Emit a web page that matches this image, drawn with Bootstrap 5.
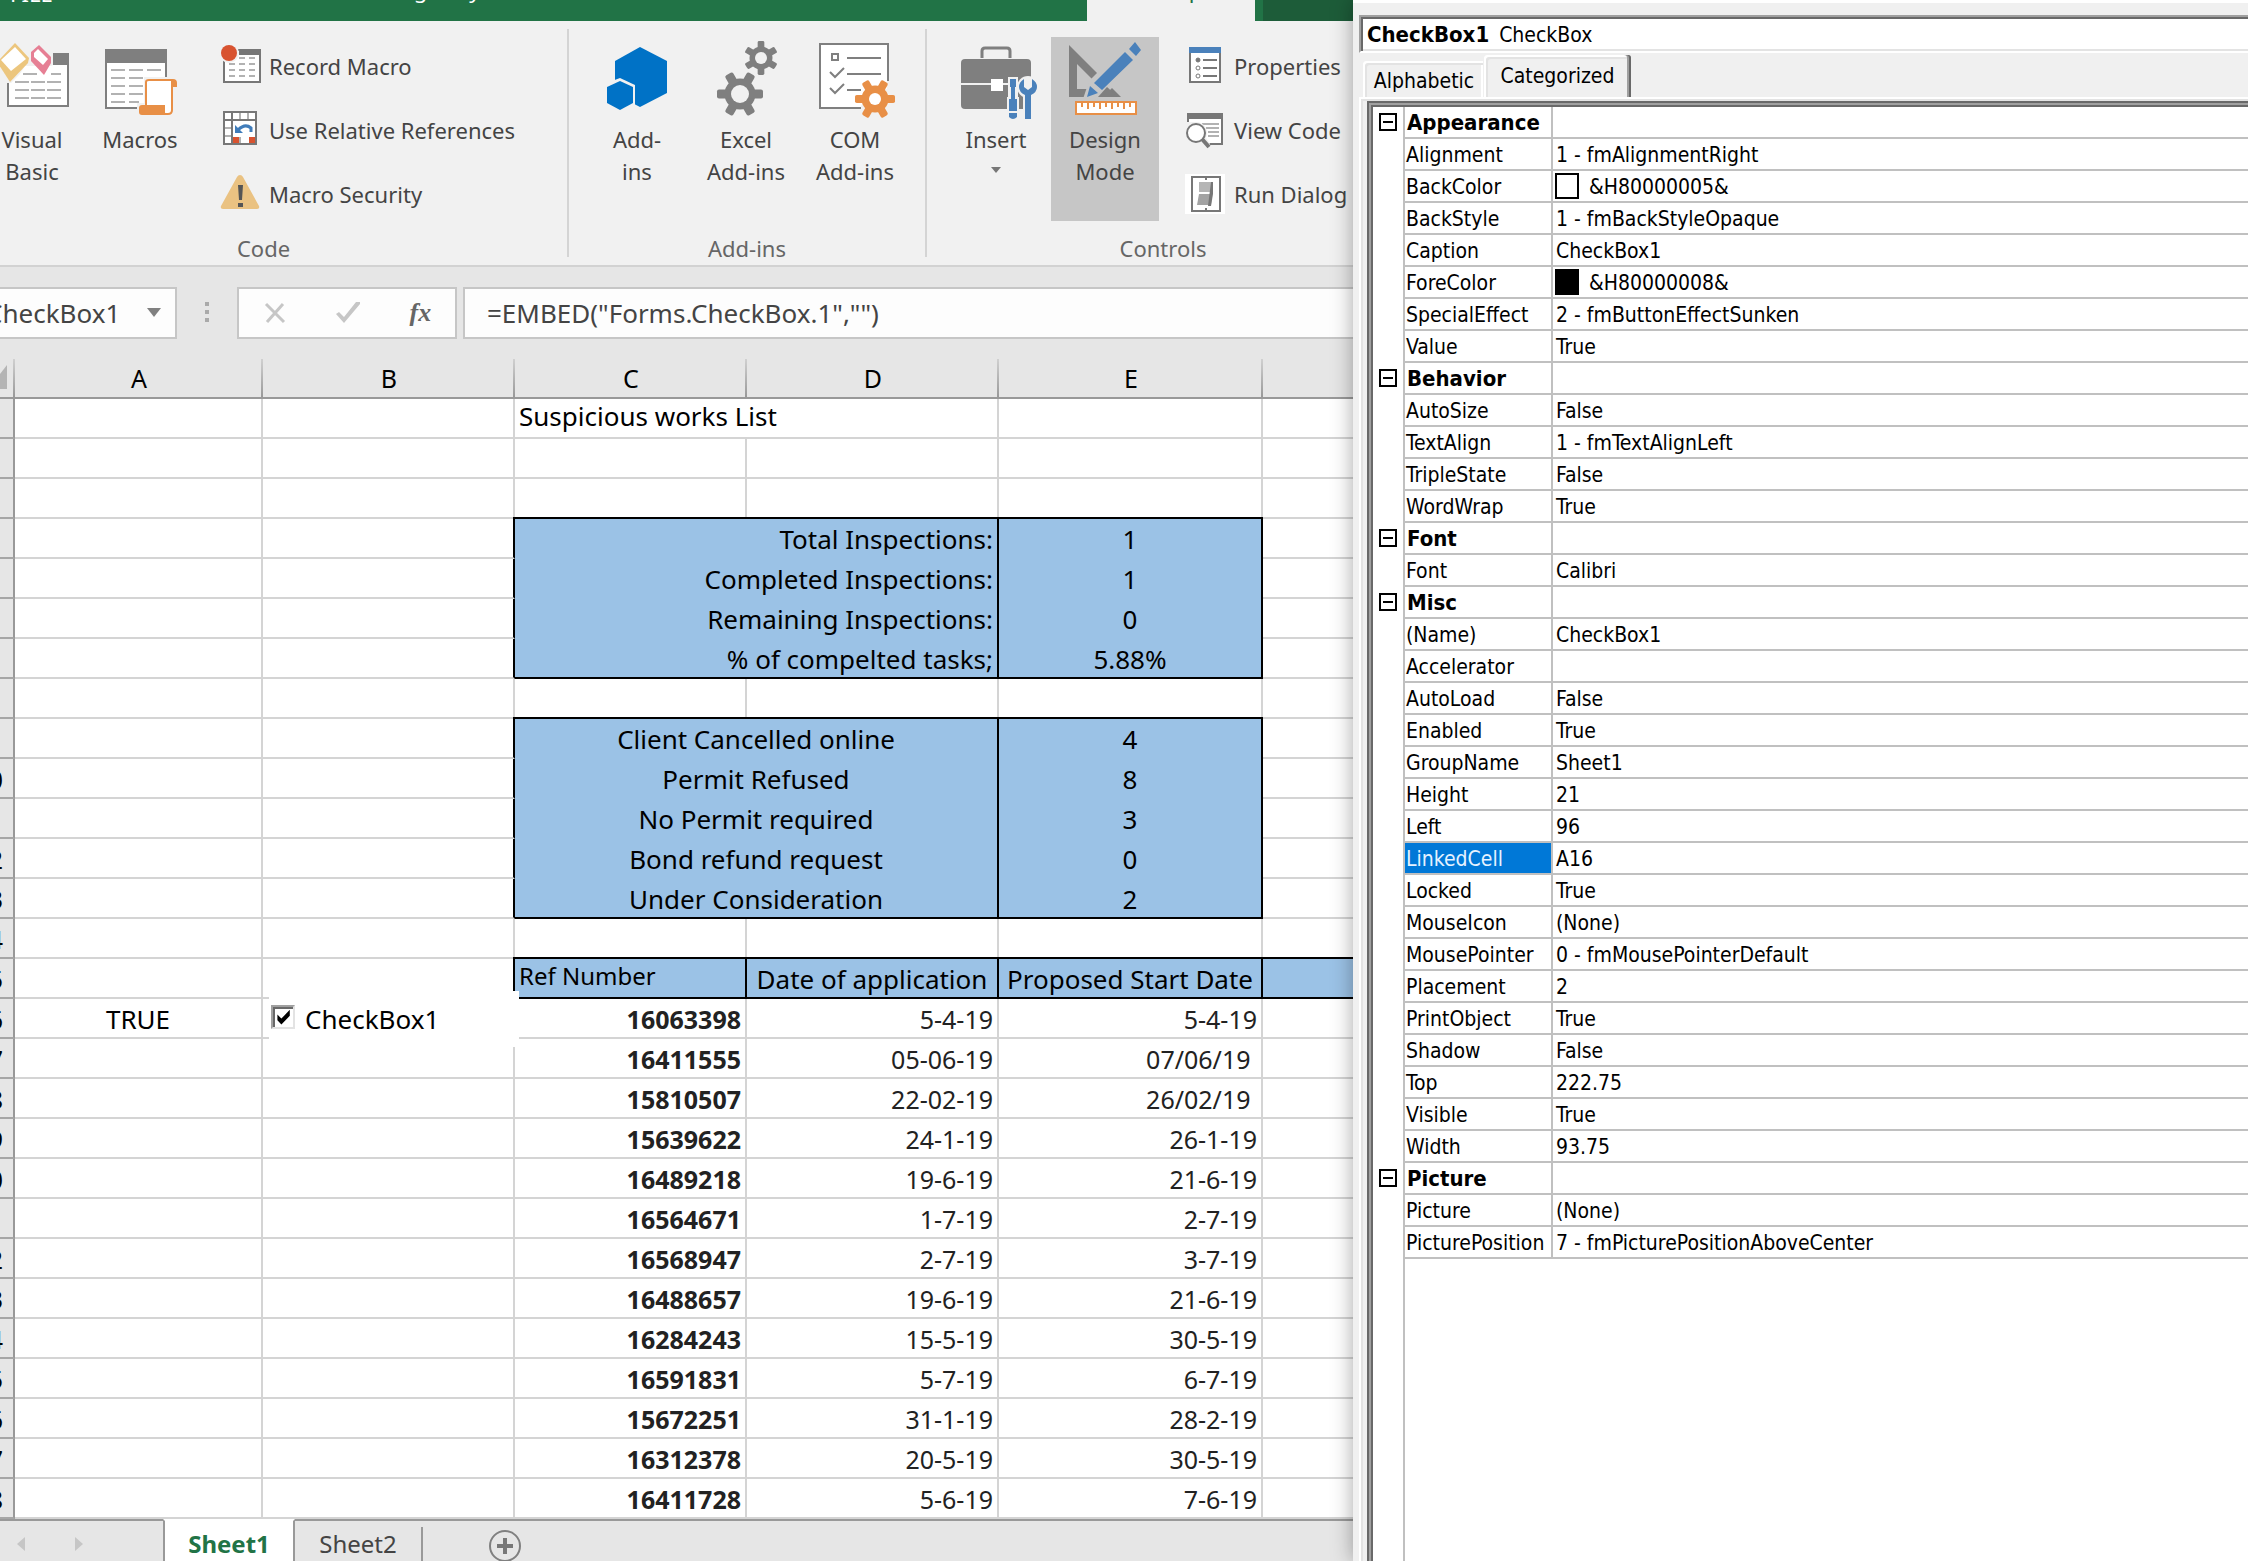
<!DOCTYPE html>
<html lang="en">
<head>
<meta charset="utf-8">
<meta name="viewport" content="width=device-width, initial-scale=1">
<title>Sheet1 - Suspicious works List</title>
<link href="https://cdn.jsdelivr.net/npm/bootstrap@5.3.0/dist/css/bootstrap.min.css" rel="stylesheet">
<script src="https://cdn.jsdelivr.net/npm/bootstrap@5.3.0/dist/js/bootstrap.bundle.min.js"></script>
<style>
  body { font-family: "Noto Sans", "Open Sans", sans-serif; font-size: 22px; line-height: 32px; color: #444; background: #f0f0f0; }
  svg { display: block; flex: none; }
  button { color: inherit; }
  .workspace { display: grid; grid-template-columns: minmax(0, 1353fr) minmax(0, 895fr); min-height: 100vh; overflow: hidden; }
  .excel { background: #e6e6e6; white-space: nowrap; }

  /* ribbon */
  .tabstrip { background: #217346; height: 21px; overflow: hidden; }
  .tabstrip a { color: #fff; text-decoration: none; height: 48px; margin-top: -27px; }
  .tab-file { padding: 4px 0 0 10px; width: 388px; }
  .tab-layout { width: 699px; }
  .tab-dev { background: #f1f1f1; width: 168px; text-align: center; }
  .tabstrip a.tab-dev { color: #217346; }
  .tab-more { background: #1d5c39; margin-left: 8px; }
  .ribbon { background: #f1f1f1; border-bottom: 2px solid #d2d2d2; height: 246px; overflow: hidden; }
  .rgroup { flex: none; padding-top: 13px; }
  .rgroup-code { width: 607px; margin-left: -40px; padding-left: 24px; }
  .rgroup-addins { width: 356px; padding-left: 14px; }
  .rgroup-controls { width: 472px; padding-left: 15px; }
  .rsep { flex: none; width: 2px; margin: 8px 0; background: #d4d4d4; }
  .rgroup-name { color: #666; margin-top: 6px; text-align: center; }
  .rgroup-code .rgroup-name { margin-left: -24px; }
  .rgroup-addins .rgroup-name { margin-left: -14px; }
  .rgroup-controls .rgroup-name { margin-left: -15px; }
  .rbody { height: 192px; }
  .rgroup-addins .rbody, .rgroup-controls .rbody { gap: 1px; }
  .small-col { margin-left: 20px; }
  .rgroup-controls .small-col { margin-left: 25px; }
  .big { display: flex; flex-direction: column; align-items: center; width: 108px; height: 184px; margin-top: 3px; padding: 0; border: 0; background: none; text-align: center; white-space: normal; }
  .big-vb { width: 96px; }
  .big-macros { width: 120px; }
  .big-on { background: #c6c6c6; }
  .caret { width: 0; height: 0; margin-top: 12px; border: 5px solid transparent; border-top: 6px solid #777; border-bottom: 0; }
  .small-item { height: 64px; border: 0; padding: 0; background: none; display: flex; align-items: center; gap: 9px; }

  /* formula bar */
  .fbar { padding: 20px 0; font-size: 26px; }
  .fbox { background: #fdfdfd; border: 2px solid #c6c6c6; height: 52px; }
  .namebox { width: 177px; border-left: 0; }
  .namebox input { width: 140px; margin-left: -14px; }
  .fbar input { border: 0; padding: 0; background: none; color: #444; outline: 0; min-width: 0; }
  .dots { width: 60px; }
  .fbtns { width: 220px; margin-right: 6px; }
  .fbtns button { border: 0; padding: 0; background: none; }
  .fx-btn { font: italic 700 26px/32px "Liberation Serif", serif; color: #666; }
  .ftext { border-right: 0; padding-left: 22px; }

  /* sheet */
  .grid { width: 100%; table-layout: fixed; border-collapse: separate; border-spacing: 0; color: #000; font-size: 26px; line-height: 36px; }
  .grid th { height: 40px; padding: 0; font-weight: 400; text-align: center; background: #e6e6e6; border-right: 2px solid; border-bottom: 2px solid #999; }
  .grid thead th { border-right: 0; font-size: 25px; background: linear-gradient(#d0d0d0, #999) right / 2px 100% no-repeat #e6e6e6; }
  .grid thead th:last-child { background: #e6e6e6; }
  .grid tbody th { border-right-color: #999; border-bottom-color: #a6a6a6; }
  .rownum { display: flex; justify-content: flex-end; height: 36px; margin-top: 2px; padding-right: 10px; font-size: 25px; }
  .grid td { height: 40px; padding: 2px 4px 0 4px; overflow: hidden; background: #fff; border-right: 2px solid #d4d4d4; border-bottom: 2px solid #d4d4d4; }
  .grid td:last-child { border-right: 0; }
  .grid td.num { font-size: 25px; text-align: right; color: #222; }
  .grid td.ref { font-weight: 700; }
  .grid td.upper { line-height: 32px; padding: 0 4px 4px; }
  .grid td.fs-ref { font-size: 24px; }
  .grid td.blue { background: #9bc2e6; }
  .grid td.kr { border-right-color: #000; }
  .grid td.kb { border-bottom-color: #000; }
  .grid td.kt { box-shadow: -2px -2px 0 #000, 0 -2px 0 #000; }
  .grid td.nb { border-bottom: 0; padding-bottom: 2px; }
  .grid td.host { position: relative; overflow: visible; }
  .checkctl { position: absolute; left: 6px; top: -8px; width: 250px; height: 56px; background: #fff; display: flex; align-items: center; gap: 10px; padding: 0 0 0 2px; z-index: 2; }
  .checkctl input { appearance: none; margin: 0 0 4px; width: 24px; height: 24px; border: 2px solid #a0a0a0; border-right-color: #e3e3e3; border-bottom-color: #e3e3e3; box-shadow: inset 2px 2px 0 #696969; position: relative; }
  .checkctl input:checked::after { content: ""; position: absolute; inset: 0; background: #000; clip-path: polygon(22% 38%, 42% 58%, 84% 14%, 84% 44%, 42% 88%, 22% 66%); }

  .sheets { height: 42px; font-size: 24px; }
  .sheets > * { border-top: 2px solid #999; }
  .sheets button { border-width: 2px 0 0; border-style: solid; border-color: #999; padding: 5px 0 0; background: none; }
  .nav-arrows { width: 163px; padding: 16px 0 0 16px; }
  .sheets .s-on { width: 132px; background: #fff; color: #217346; font-weight: 700; border: 2px solid #999; border-top-color: #fff; border-bottom: 0; }
  .sheets .s-off { width: 126px; }
  .s-end { padding-top: 6px; }
  .s-end i { display: block; width: 2px; height: 34px; background: #999; }

  /* properties window */
  .props { position: relative; z-index: 3; background: #f0f0f0; border-top: 3px solid #fff; box-shadow: 0 0 20px rgba(0,0,0,.35); color: #000; font-family: "DejaVu Sans Condensed", "DejaVu Sans", sans-serif; font-size: 21px; line-height: 28px; white-space: nowrap; padding: 12px 0 0 6px; }
  .objbox { height: 38px; background: #fff; border: 2px solid #a0a0a0; border-right: 0; border-bottom-color: #fff; box-shadow: inset 2px 2px 0 #696969, inset 0 -2px 0 #e3e3e3; padding: 4px 0 0 6px; }
  .objbox b { font-size: 22px; margin-right: 10px; }
  .ptabs { padding: 4px 0 0 4px; height: 44px; }
  .ptabs button { border: 0; padding: 4px 0 0 2px; background: #f0f0f0; }
  .ptabs .p-cat { padding: 0; }
  .p-alpha { width: 120px; height: 36px; border-radius: 3px 0 0; box-shadow: inset 2px 2px 0 #fff, inset 4px 4px 0 #e3e3e3, inset -2px 0 0 #fff; }
  .p-cat { width: 147px; height: 42px; margin-left: 1px; border-radius: 3px 3px 0 0; box-shadow: inset -2px 0 0 #696969, inset -4px 0 0 #a0a0a0, inset 2px 2px 0 #fff, inset 4px 4px 0 #e3e3e3; }
  .p-page { border-left: 2px solid #fff; border-top: 2px solid #fff; box-shadow: inset 2px 2px 0 #e3e3e3; padding: 2px 0 0 6px; }
  .p-frame { border-left: 2px solid #696969; border-top: 2px solid #696969; box-shadow: inset 2px 2px 0 #a0a0a0, inset 4px 4px 0 #696969; padding: 4px 0 0 4px; background: #fff; }
  .plist { width: 100%; table-layout: fixed; border-collapse: separate; border-spacing: 0; }
  .plist td, .plist th { height: 32px; padding: 2px 0 0 1px; font-weight: 400; border-bottom: 2px solid #c0c0c0; border-right: 2px solid #c0c0c0; }
  .plist td:last-child { border-right: 0; padding-left: 3px; }
  .plist .gut { border-bottom: 0; padding: 0 0 2px 6px; }
  .plist .cat { font-weight: 700; font-size: 22px; padding-left: 2px; }
  .plist .sel { background: #0078d7; color: #e6f2ff; }
  .fold { display: block; width: 18px; height: 18px; padding: 0; border: 2px solid #000; background: linear-gradient(#000, #000) center / 10px 2px no-repeat #fff; }
  .swatch { display: inline-block; width: 24px; height: 26px; border: 2px solid #000; vertical-align: top; margin: 0 10px 0 -1px; }
  .plist .rest { border-bottom: 0; }
</style>
</head>
<body>
<svg width="0" height="0" class="position-absolute" aria-hidden="true">
  <defs>
    <g id="gear">
      <circle r="15.500"/>
      <rect x="-23" y="-4.500" width="46" height="9" rx="2"/>
      <rect x="-23" y="-4.500" width="46" height="9" rx="2" transform="rotate(60)"/>
      <rect x="-23" y="-4.500" width="46" height="9" rx="2" transform="rotate(120)"/>
    </g>
  </defs>
</svg>

<div class="workspace">
  <main class="excel d-flex flex-column overflow-hidden">
    <nav class="tabstrip d-flex">
      <a href="#" class="tab-file flex-shrink-0">FILE</a>
      <a href="#" class="tab-layout flex-shrink-0">Page Layout</a>
      <a href="#" class="tab-dev flex-shrink-0">Developer</a>
      <div class="tab-more flex-fill"></div>
    </nav>

    <div class="ribbon d-flex">
      <section class="rgroup rgroup-code">
        <div class="rbody d-flex">
          <button type="button" class="big big-vb">
            <svg width="96" height="86" viewBox="-16 37 96 86">
              <path d="M8 54h60v52H8z" fill="#fff" stroke="#7f7f7f" stroke-width="2"/>
              <path d="M52 53h17v12H52z" fill="#7f7f7f"/>
              <path d="M15 82h14M31 82h14M47 82h14M15 90h14M31 90h14M47 90h14M15 98h14M31 98h14M47 98h14" stroke="#b2b2b2" stroke-width="2"/>
              <path d="M0 40h53v25l-4 2-4 6-20-4-14 14-13 0z" fill="#f1f1f1"/>
              <path d="M25 66h42v8H20z" fill="#fff"/>
              <path d="M23 74h14M51 74h10" stroke="#b2b2b2" stroke-width="2"/>
              <path d="M15 43 29 58 28 63 10 82-1 65v-5z" fill="#ecc67e"/>
              <path d="M15 47 26 59 11 71 1 60z" fill="#fff"/>
              <path d="M39 45 51 57v6L44 75 31 61v-9z" fill="#e67f94"/>
              <path d="M38 49 48 59 43 65 34 57v-4z" fill="#fff"/>
            </svg>
            <span>Visual<br>Basic</span>
          </button>
          <button type="button" class="big big-macros">
            <svg width="120" height="86" viewBox="80 37 120 86">
              <path d="M106 50h60v58h-60z" fill="#fff" stroke="#7f7f7f" stroke-width="2"/>
              <path d="M105 49h62v14h-62z" fill="#7f7f7f"/>
              <path d="M111 70h14M129 70h14M147 70h14M111 78h14M129 78h14M111 86h14M129 86h14M111 94h14M129 94h14M111 102h14M129 102h10" stroke="#b2b2b2" stroke-width="2"/>
              <path d="M144 77h35v40h-42V103h7z" fill="#f1f1f1"/>
              <path d="M149 80h23V110q0 4-4 4h-22V82q0-2 3-2z" fill="#fff" stroke="#e88f46" stroke-width="2"/>
              <path d="M149 79h24q4 0 4 4v4h-5v-6h-23zM142 105h23v7q0 3 3 3h-26q-3 0-3-3v-4q0-3 3-3z" fill="#e88f46"/>
            </svg>
            <span>Macros</span>
          </button>
          <div class="small-col">
            <button type="button" class="small-item">
              <svg width="40" height="40" viewBox="220 46 40 40" overflow="visible">
                <path d="M224 50h36v32h-36z" fill="#fff" stroke="#777" stroke-width="2"/>
                <path d="M239 49h22v6h-22z" fill="#777"/>
                <path d="M239 58h6M249 58h6M229 64h6M239 64h6M249 64h6M229 70h6M239 70h6M249 70h6M229 76h6M239 76h6M249 76h6" stroke="#b2b2b2" stroke-width="2"/>
                <circle cx="229" cy="53" r="10" fill="#f1f1f1"/><circle cx="229" cy="53" r="8" fill="#d85330"/>
              </svg>Record Macro
            </button>
            <button type="button" class="small-item">
              <svg width="40" height="40" viewBox="220 110 40 40">
                <path d="M224 112h32v32h-32z" fill="#fff" stroke="#777" stroke-width="2"/>
                <path d="M232 112v32M223 120h34" stroke="#777" stroke-width="2"/>
                <path d="M240 113v6M248 113v6M225 128h6M225 136h6M240 137v6" stroke="#b2b2b2" stroke-width="2"/>
                <path d="M233 137h6v6h-6zM249 137h6v6h-6z" fill="#d85330"/>
                <path d="M238 130q7-7 13-2v4" fill="none" stroke="#3f7cba" stroke-width="3"/>
                <path d="M235 125v8h8z" fill="#3f7cba"/>
              </svg>Use Relative References
            </button>
            <button type="button" class="small-item">
              <svg width="40" height="40" viewBox="220 174 40 40">
                <path d="M240 175q2 0 3 2l16 29q1 3-2 3h-34q-3 0-2-3l16-29q1-2 3-2z" fill="#eac282"/>
                <path d="M238 185h5l-1 15h-3zM238 203h5v4h-5z" fill="#555"/>
              </svg>Macro Security
            </button>
          </div>
        </div>
        <div class="rgroup-name">Code</div>
      </section>
      <div class="rsep"></div>

      <section class="rgroup rgroup-addins">
        <div class="rbody d-flex">
          <button type="button" class="big">
            <svg width="108" height="86" viewBox="583 37 108 86">
              <path d="M640 47l27 14v32l-27 14-25-13V61z" fill="#0072c6"/>
              <path d="M604 84l16-6 15 7v24h-31z" fill="#f1f1f1"/>
              <path d="M607 87l13-6 13 6v16l-13 7-13-7z" fill="#0072c6"/>
            </svg>
            <span>Add-<br>ins</span>
          </button>
          <button type="button" class="big">
            <svg width="108" height="86" viewBox="692 37 108 86">
              <g fill="#7f7f7f"><use href="#gear" transform="translate(740 94)"/><use href="#gear" transform="translate(761 58) rotate(30) scale(.74)"/></g>
              <circle cx="740" cy="94" r="9" fill="#f1f1f1"/><circle cx="761" cy="58" r="6" fill="#f1f1f1"/>
            </svg>
            <span>Excel<br>Add-ins</span>
          </button>
          <button type="button" class="big">
            <svg width="108" height="86" viewBox="801 37 108 86">
              <path d="M820 44h68v64h-68z" fill="#fff" stroke="#7f7f7f" stroke-width="2"/>
              <path d="M832 54h6v6h-6zM847 58h34M847 74h34M847 90h14M830 72l5 5 9-9M830 88l5 5 9-9" fill="none" stroke="#7f7f7f" stroke-width="2"/>
              <path d="M887 81h4v29h-30v-4l14-20z" fill="#f1f1f1"/><path d="M861 90h14v16h-12zM880 79h7v10h-12z" fill="#fff"/>
              <use href="#gear" fill="#e88f46" transform="translate(875 99) scale(.87)"/>
              <circle cx="875" cy="99" r="6" fill="#fff"/>
            </svg>
            <span>COM<br>Add-ins</span>
          </button>
        </div>
        <div class="rgroup-name">Add-ins</div>
      </section>
      <div class="rsep"></div>

      <section class="rgroup rgroup-controls">
        <div class="rbody d-flex">
          <button type="button" class="big">
            <svg width="108" height="86" viewBox="942 37 108 86">
              <path d="M982 58v-7q0-3 3-3h22q3 0 3 3v7" fill="none" stroke="#7f7f7f" stroke-width="3"/>
              <rect x="961" y="59" width="70" height="50" rx="4" fill="#7f7f7f"/>
              <path d="M961 83h70v2h-70z" fill="#f1f1f1"/><path d="M991 79h12v12h-12z" fill="#fff"/>
              <path d="M1008 77h10v20h1v24h-12V97h1z" fill="#f1f1f1"/>
              <circle cx="1028" cy="87" r="11" fill="#f1f1f1"/><path d="M1023 90h10v30h-10z" fill="#f1f1f1"/>
              <path d="M1010 79h6v8h-1v12h2v12h-8V99h2V87h-1zM1009 113h8v4q-4 4-8 0z" fill="#4a81bb"/>
              <path d="M1024 79v8l4 3 4-3v-8q5 3 5 8t-6 8v24h-6V95q-6-3-6-8t5-8z" fill="#4a81bb"/>
            </svg>
            <span>Insert</span>
            <span class="caret"></span>
          </button>
          <button type="button" class="big big-on">
            <svg width="108" height="86" viewBox="1051 37 108 86">
              <path fill-rule="evenodd" d="M1069 45l52 52h-52zM1077 64v25h25z" fill="#7f7f7f"/>
              <path d="M1083 99l6-18 38-38 16 14-40 40-16 6z" fill="#c6c6c6"/>
              <path d="M1098 97l9-10 11 10z" fill="#7f7f7f"/>
              <path d="M1087 97l3-11 8 7zM1094 83l31-31 8 8-31 30zM1129 49l6-7 6 8-5 6z" fill="#4a81bb"/>
              <path d="M1076 102h60v12h-60z" fill="#fff" stroke="#e88f46" stroke-width="2"/>
              <path d="M1082 102v5M1088 102v7M1094 102v5M1100 102v7M1106 102v5M1112 102v7M1118 102v5M1124 102v7M1130 102v5" stroke="#e88f46" stroke-width="2"/>
            </svg>
            <span>Design<br>Mode</span>
          </button>
          <div class="small-col">
            <button type="button" class="small-item">
              <svg width="40" height="40" viewBox="1185 46 40 40">
                <path d="M1190 48h30v34h-30z" fill="#fff" stroke="#777" stroke-width="2"/><path d="M1189 47h32v6h-32z" fill="#4a81bb"/>
                <path d="M1203 60h14M1203 68h14M1203 76h14" stroke="#777" stroke-width="2"/>
                <g fill="none" stroke="#777"><circle cx="1198" cy="60" r="2" fill="#777"/><circle cx="1198" cy="68" r="2"/><circle cx="1198" cy="76" r="2"/></g>
              </svg>Properties
            </button>
            <button type="button" class="small-item">
              <svg width="40" height="40" viewBox="1185 110 40 40">
                <path d="M1188 114h34v30h-34z" fill="#fff" stroke="#777" stroke-width="2"/><path d="M1187 113h36v6h-36z" fill="#777"/>
                <path d="M1202 124h17M1206 128h13M1208 132h11M1208 136h11" stroke="#b2b2b2" stroke-width="2"/>
                <path d="M1184 122h12l14 22v6h-26z" fill="#f1f1f1"/>
                <circle cx="1196" cy="133" r="11" fill="#f1f1f1"/><circle cx="1196" cy="133" r="9" fill="#fff" stroke="#777" stroke-width="2"/><path d="M1202 139l7 8" stroke="#777" stroke-width="4"/>
              </svg>View Code
            </button>
            <button type="button" class="small-item">
              <svg width="40" height="40" viewBox="1185 173 40 40">
                <path d="M1185 173h40v40h-40z" fill="#fff"/><path d="M1192 176h28v34h-28z" fill="#fff" stroke="#777" stroke-width="2"/>
                <path d="M1199 181h14l-1 10h-13z" fill="#b5b5b5"/><path d="M1199 193h13l-1 11h-14z" fill="#a3a3a3"/><path d="M1211 181h2v12l-2 12h-3z" fill="#777"/>
                <path d="M1206 177v2M1206 207v2" stroke="#777" stroke-width="2"/>
              </svg>Run Dialog
            </button>
          </div>
        </div>
        <div class="rgroup-name">Controls</div>
      </section>
    </div>

    <div class="fbar d-flex">
      <div class="fbox namebox d-flex align-items-center">
        <input type="text" value="CheckBox1" aria-label="Name Box">
        <svg class="ms-auto me-2" width="22" height="10" viewBox="0 0 22 10"><path d="M2 0h14l-7 9z" fill="#808080"/></svg>
      </div>
      <div class="dots d-flex align-items-center justify-content-center">
        <svg width="4" height="22" viewBox="0 0 4 22"><path d="M0 0h4v4H0zM0 8h4v4H0zM0 16h4v4H0z" fill="#aaa"/></svg>
      </div>
      <div class="fbox fbtns d-flex align-items-center justify-content-around">
        <button type="button" aria-label="Cancel"><svg width="24" height="24" viewBox="0 0 24 24"><path d="M3 3l18 18M20 3 4 21" stroke="#c6c6c6" stroke-width="3"/></svg></button>
        <button type="button" aria-label="Enter"><svg width="28" height="24" viewBox="0 0 28 24"><path d="M2 13l8 9L26 3V1h-4L10 16l-5-5z" fill="#c6c6c6"/></svg></button>
        <button type="button" aria-label="Insert Function" class="fx-btn">fx</button>
      </div>
      <div class="fbox ftext d-flex align-items-center flex-fill">
        <input type="text" class="w-100" value='=EMBED("Forms.CheckBox.1","")' aria-label="Formula Bar">
      </div>
    </div>

    <table class="grid">
      <colgroup><col style="width:15px"><col style="width:248px"><col style="width:252px"><col style="width:232px"><col style="width:252px"><col style="width:264px"><col></colgroup>
      <thead><tr>
        <th><svg width="13" height="26" viewBox="0 0 13 26"><path d="M7 0v24H0V9z" fill="#b4b4b4"/></svg></th>
        <th>A</th><th>B</th><th>C</th><th>D</th><th>E</th><th></th>
      </tr></thead>
      <tbody id="cells"></tbody>
    </table>

    <div class="sheets d-flex">
      <div class="nav-arrows">
        <svg width="70" height="14" viewBox="0 0 70 14"><path d="M9 0v14L1 7zM59 0v14l8-7z" fill="#c6c6c6"/></svg>
      </div>
      <button type="button" class="s-on">Sheet1</button>
      <button type="button" class="s-off">Sheet2</button>
      <div class="s-end"><i></i></div>
      <div class="flex-fill overflow-hidden">
        <svg class="mt-2" width="100" height="34" viewBox="423 1529 100 34"><circle cx="505" cy="1546" r="15" fill="none" stroke="#808080" stroke-width="2"/><path d="M497 1546h16M505 1538v16" stroke="#777" stroke-width="4"/></svg>
      </div>
    </div>
  </main>

  <aside class="props d-flex flex-column">
    <div class="objbox"><b>CheckBox1</b>CheckBox</div>
    <div class="ptabs d-flex align-items-end">
      <button type="button" class="p-alpha">Alphabetic</button>
      <button type="button" class="p-cat">Categorized</button>
    </div>
    <div class="p-page flex-fill d-flex flex-column">
      <div class="p-frame flex-fill d-flex flex-column">
        <table class="plist flex-fill">
          <colgroup><col style="width:32px"><col style="width:148px"><col></colgroup>
          <tbody id="plist"></tbody>
        </table>
      </div>
    </div>
  </aside>
</div>

<script>
  // Worksheet rows 1-28.
  const totals = { 4: ['Total Inspections:', '1'], 5: ['Completed Inspections:', '1'], 6: ['Remaining Inspections:', '0'], 7: ['% of compelted tasks;', '5.88%'] };
  const states = { 9: ['Client Cancelled online', '4'], 10: ['Permit Refused', '8'], 11: ['No Permit required', '3'], 12: ['Bond refund request', '0'], 13: ['Under Consideration', '2'] };
  const works = [
    ['16063398', '5-4-19', '5-4-19'], ['16411555', '05-06-19', '07/06/19&nbsp;'], ['15810507', '22-02-19', '26/02/19&nbsp;'],
    ['15639622', '24-1-19', '26-1-19'], ['16489218', '19-6-19', '21-6-19'], ['16564671', '1-7-19', '2-7-19'],
    ['16568947', '2-7-19', '3-7-19'], ['16488657', '19-6-19', '21-6-19'], ['16284243', '15-5-19', '30-5-19'],
    ['16591831', '5-7-19', '6-7-19'], ['15672251', '31-1-19', '28-2-19'], ['16312378', '20-5-19', '30-5-19'], ['16411728', '5-6-19', '7-6-19']
  ];
  let rows = '';
  for (let r = 1; r <= 28; r++) {
    const num = `<th scope="row"><div class="rownum">${r < 10 ? '' : r}</div></th>`;
    const block = totals[r] || states[r];
    let a = '<td></td>', b = `<td class="${block || r === 15 ? 'kr' : ''}"></td>`, rest;
    if (block) {
      const line = (r === 7 || r === 13 ? 'kb' : 'nb') + (r === 4 || r === 9 ? ' kt' : '');
      rest = `<td colspan="2" class="blue kr ${line} ${totals[r] ? 'text-end' : 'text-center'}">${block[0]}</td><td class="blue kr ${line} text-center">${block[1]}</td><td></td>`;
    } else if (r === 15) {
      rest = '<td class="blue kr kb kt upper fs-ref">Ref Number</td><td class="blue kr kb kt text-center px-0">Date of application</td><td class="blue kr kb kt text-center px-0">Proposed Start Date</td><td class="blue kb kt"></td>';
    } else if (r >= 16) {
      const w = works[r - 16];
      rest = `<td class="num ref">${w[0]}</td><td class="num">${w[1]}</td><td class="num">${w[2]}</td><td></td>`;
    } else if (r === 1) {
      rest = '<td colspan="2" class="upper">Suspicious works List</td><td></td><td></td>';
    } else {
      rest = '<td></td><td></td><td></td><td></td>';
    }
    if (r === 16) {
      a = '<td class="text-center">TRUE</td>';
      b = '<td class="host"><label class="checkctl"><input type="checkbox" checked>CheckBox1</label></td>';
    }
    rows += `<tr>${num}${a}${b}${rest}</tr>`;
  }
  document.getElementById('cells').innerHTML = rows;

  // Property list, grouped by category.
  const groups = {
    Appearance: [['Alignment', '1 - fmAlignmentRight'], ['BackColor', '&amp;H80000005&amp;', '#fff'], ['BackStyle', '1 - fmBackStyleOpaque'], ['Caption', 'CheckBox1'], ['ForeColor', '&amp;H80000008&amp;', '#000'], ['SpecialEffect', '2 - fmButtonEffectSunken'], ['Value', 'True']],
    Behavior: [['AutoSize', 'False'], ['TextAlign', '1 - fmTextAlignLeft'], ['TripleState', 'False'], ['WordWrap', 'True']],
    Font: [['Font', 'Calibri']],
    Misc: [['(Name)', 'CheckBox1'], ['Accelerator', ''], ['AutoLoad', 'False'], ['Enabled', 'True'], ['GroupName', 'Sheet1'], ['Height', '21'], ['Left', '96'], ['LinkedCell', 'A16'], ['Locked', 'True'], ['MouseIcon', '(None)'], ['MousePointer', '0 - fmMousePointerDefault'], ['Placement', '2'], ['PrintObject', 'True'], ['Shadow', 'False'], ['Top', '222.75'], ['Visible', 'True'], ['Width', '93.75']],
    Picture: [['Picture', '(None)'], ['PicturePosition', '7 - fmPicturePositionAboveCenter']]
  };
  let list = '';
  for (const [name, items] of Object.entries(groups)) {
    list += `<tr><td class="gut"><button type="button" class="fold" aria-label="Collapse ${name}"></button></td><th class="cat">${name}</th><td></td></tr>`;
    for (const [k, v, c] of items) {
      const sw = c ? `<span class="swatch" style="background:${c}"></span>` : '';
      list += `<tr><td class="gut"></td><th class="${k === 'LinkedCell' ? 'sel' : ''}">${k}</th><td>${sw}${v}</td></tr>`;
    }
  }
  list += '<tr class="h-100"><td class="gut"></td><td colspan="2" class="rest"></td></tr>';
  document.getElementById('plist').innerHTML = list;
</script>
</body>
</html>
